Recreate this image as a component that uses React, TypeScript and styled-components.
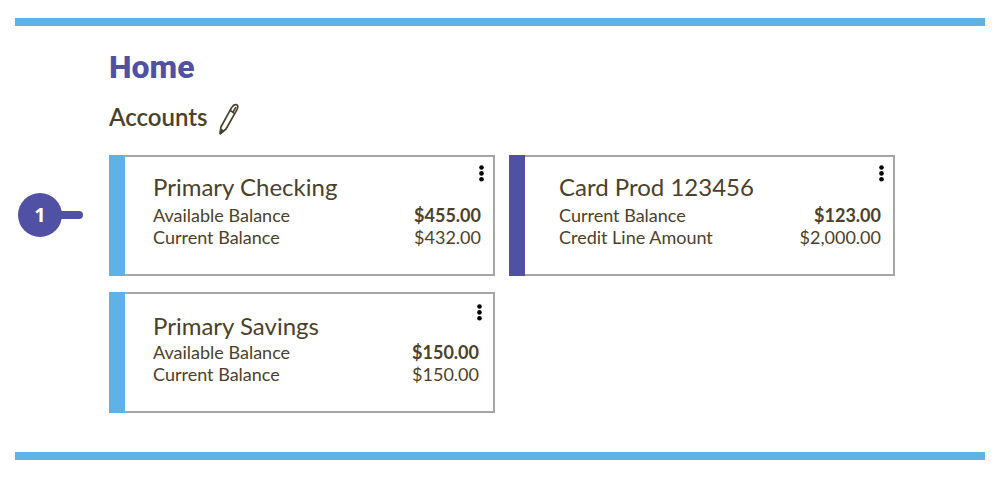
import React from 'react';
import styled, { createGlobalStyle } from 'styled-components';

const color = {
  sky: '#5eb3e4',
  indigo: '#5051a4',
  ink: '#4b412b',
  border: '#a5a6a9',
};

const GlobalStyle = createGlobalStyle`
  *, *::before, *::after { box-sizing: border-box; }
  body {
    margin: 0;
    background: #fff;
    color: ${color.ink};
    font-family: Lato, "Open Sans", sans-serif;
  }
`;

const Page = styled.div`
  padding: 18px 15px;
`;

const Frame = styled.main`
  border-top: 8px solid ${color.sky};
  border-bottom: 8px solid ${color.sky};
  padding: 19px 90px 39px 94px;
`;

const Title = styled.h1`
  margin: 0;
  font-family: Roboto, sans-serif;
  font-size: 32px;
  line-height: 44px;
  font-weight: 800;
  color: ${color.indigo};
`;

const SectionHeader = styled.div`
  display: flex;
  align-items: flex-end;
  gap: 12px;
  margin: 10px 0 20px;
`;

const SectionTitle = styled.h2`
  margin: 0;
  font-size: 24px;
  line-height: 36px;
  font-weight: 600;
`;

const IconButton = styled.button`
  display: flex;
  padding: 0;
  border: 0;
  background: none;
  color: inherit;
  cursor: pointer;
`;

const MenuButton = styled(IconButton)`
  align-self: flex-end;
  margin-right: -3px;
  color: #000;
`;

const Cards = styled.ul`
  display: grid;
  grid-template-columns: 1fr 1fr;
  gap: 16px 14px;
  margin: 0;
  padding: 0;
  list-style: none;
`;

const CardItem = styled.li`
  position: relative;
`;

const Card = styled.article`
  display: flex;
  min-height: 121px;
`;

const Accent = styled.div<{ $color: string }>`
  flex: 0 0 16px;
  background: ${p => p.$color};
`;

const CardBody = styled.div<{ $inset: number; $low?: boolean }>`
  flex: 1;
  display: flex;
  flex-direction: column;
  padding: ${p => (p.$low ? '10px 14px 20px' : '8px 12px 20px')};
  padding-left: ${p => p.$inset}px;
  border: 2px solid ${color.border};
  border-left: 0;
`;

const CardTitle = styled.h3<{ $tight?: boolean }>`
  margin: -10px 0 ${p => (p.$tight ? 0 : 2)}px;
  font-size: 24px;
  line-height: 30px;
  font-weight: 400;
`;

const Balances = styled.dl`
  margin: 0;
`;

const Balance = styled.div<{ $strong?: boolean }>`
  display: flex;
  justify-content: space-between;
  font-size: 18px;
  line-height: 22px;

  dd {
    margin: 0;
    font-weight: ${p => (p.$strong ? 700 : 400)};
  }
`;

const Callout = styled.div`
  position: absolute;
  top: 38px;
  left: -91px;
  display: flex;
  align-items: center;

  &::after {
    content: '';
    width: 22px;
    height: 8px;
    margin-left: -1px;
    border-radius: 0 4px 4px 0;
    background: ${color.indigo};
  }
`;

const CalloutNumber = styled.span`
  width: 44px;
  height: 44px;
  border-radius: 50%;
  background: ${color.indigo};
  color: #fff;
  font-family: "Noto Sans", sans-serif;
  font-size: 20px;
  line-height: 44px;
  font-weight: 700;
  text-align: center;
`;

const PenIcon = () => (
  <svg width="20" height="32" viewBox="0 0 20 32" fill="none" stroke="currentColor" strokeWidth="1.7" strokeLinejoin="round" strokeLinecap="round" aria-hidden="true">
    <path d="M1.3 30.6 1.9 24 12.6 4.6C14.2 2 15.8 1 17.7 1.8 19.4 2.6 19 4.4 18 6.6L7 26Z" />
    <path d="M11.2 7.4 15.4 10.4M14 9.2 16.6 4.6" />
    <path d="M1.3 30.6 1.7 26.6 4.6 28Z" fill="currentColor" />
  </svg>
);

const DotsIcon = () => (
  <svg width="5" height="17" viewBox="0 0 5 17" aria-hidden="true">
    <circle cx="2.5" cy="2.5" r="2.3" />
    <circle cx="2.5" cy="8.4" r="2.3" />
    <circle cx="2.5" cy="14.3" r="2.3" />
  </svg>
);

type Account = {
  name: string;
  accent: string;
  inset: number;
  low?: boolean;
  callout?: number;
  balances: [string, string][];
};

const accounts: Account[] = [
  {
    name: 'Primary Checking',
    accent: color.sky,
    inset: 28,
    callout: 1,
    balances: [['Available Balance', '$455.00'], ['Current Balance', '$432.00']],
  },
  {
    name: 'Card Prod 123456',
    accent: color.indigo,
    inset: 34,
    balances: [['Current Balance', '$123.00'], ['Credit Line Amount', '$2,000.00']],
  },
  {
    name: 'Primary Savings',
    accent: color.sky,
    inset: 28,
    low: true,
    balances: [['Available Balance', '$150.00'], ['Current Balance', '$150.00']],
  },
];

export default function App() {
  return (
    <Page>
      <GlobalStyle />
      <Frame>
        <Title>Home</Title>
        <SectionHeader>
          <SectionTitle>Accounts</SectionTitle>
          <IconButton type="button" aria-label="Edit accounts">
            <PenIcon />
          </IconButton>
        </SectionHeader>
        <Cards>
          {accounts.map(account => (
            <CardItem key={account.name}>
              {account.callout && (
                <Callout>
                  <CalloutNumber>{account.callout}</CalloutNumber>
                </Callout>
              )}
              <Card>
                <Accent $color={account.accent} />
                <CardBody $inset={account.inset} $low={account.low}>
                  <MenuButton type="button" aria-label={`${account.name} options`}>
                    <DotsIcon />
                  </MenuButton>
                  <CardTitle $tight={account.low}>{account.name}</CardTitle>
                  <Balances>
                    {account.balances.map(([label, amount], i) => (
                      <Balance key={label} $strong={i === 0}>
                        <dt>{label}</dt>
                        <dd>{amount}</dd>
                      </Balance>
                    ))}
                  </Balances>
                </CardBody>
              </Card>
            </CardItem>
          ))}
        </Cards>
      </Frame>
    </Page>
  );
}
